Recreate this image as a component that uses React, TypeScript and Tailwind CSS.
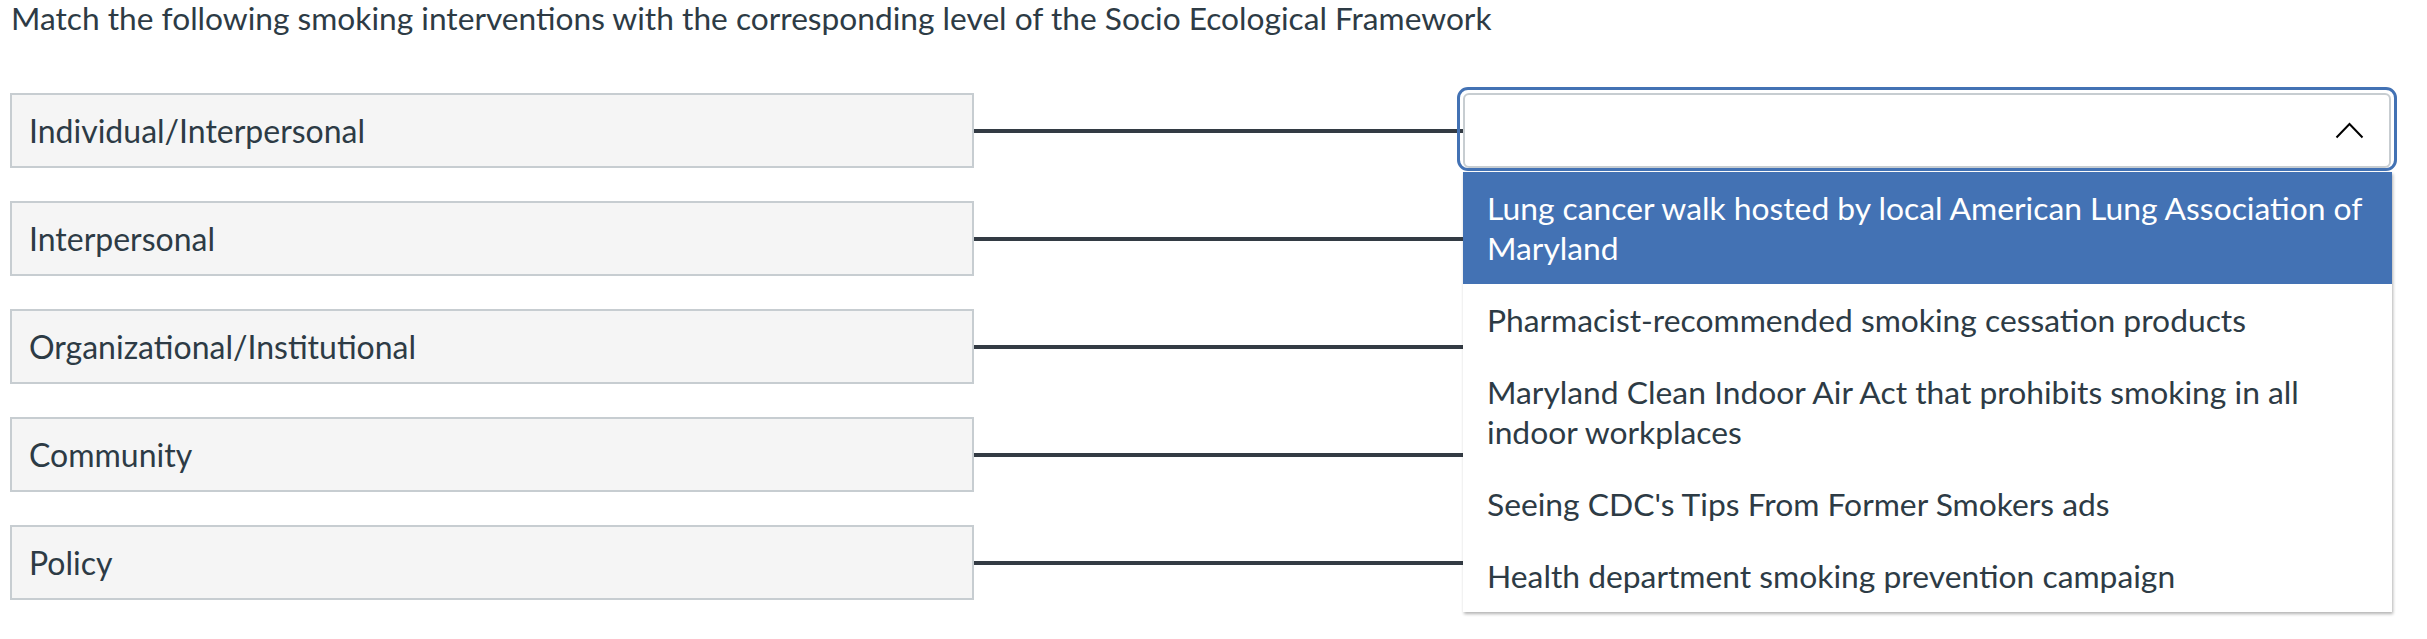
import React from 'react';

const levels = ['Individual/Interpersonal', 'Interpersonal', 'Organizational/Institutional', 'Community', 'Policy'];

const options = [
  'Lung cancer walk hosted by local American Lung Association of Maryland',
  'Pharmacist-recommended smoking cessation products',
  'Maryland Clean Indoor Air Act that prohibits smoking in all indoor workplaces',
  "Seeing CDC's Tips From Former Smokers ads",
  'Health department smoking prevention campaign',
];

const ChevronUp = () => (
  <svg width="29" height="17" viewBox="0 0 29 17" fill="none">
    <path d="M1.5 15.5 L14.5 2 L27.5 15.5" stroke="#000" strokeWidth="2" />
  </svg>
);

const App: React.FC = () => {
  return (
    <div className="w-[2427px] h-[639px] bg-white text-[#2d3b45] font-['Lato',sans-serif] overflow-hidden">
      <p className="pl-[11px] text-[31.7px] leading-[36px]">
        Match the following smoking interventions with the corresponding level of the Socio Ecological Framework
      </p>

      <div className="relative mt-[57px] flex flex-col gap-[33px]">
        {levels.map((label, i) => (
          <div key={label} className="flex items-center h-[75px]">
            <div className="ml-[10px] w-[964px] h-[75px] shrink-0 flex items-center border-2 border-[#c7cdd1] bg-[#f5f5f5] pl-[17px] text-[32px]">
              {label}
            </div>
            <div className="w-[489px] h-[4px] shrink-0 bg-[#333b44]" />
            <div className="relative w-[928px] h-[75px] shrink-0">
              {i === 0 && (
                <span className="absolute -top-[6px] -left-[6px] -right-[6px] -bottom-[3px] rounded-[11px] border-[3px] border-[#4372b4]" />
              )}
              <div className="relative h-full flex items-center justify-end pr-[25px] rounded-[6px] border-2 border-[#c7cdd1] bg-white">
                {i === 0 && <ChevronUp />}
              </div>
            </div>
          </div>
        ))}

        <ul className="absolute left-[1463px] top-[79px] w-[929px] bg-white shadow-[1px_2px_3px_rgba(0,0,0,0.3)] text-[31.8px] leading-[40px]">
          {options.map((opt, i) => (
            <li
              key={opt}
              className={`py-[16px] pl-[24px] pr-[20px] ${i === 0 ? 'bg-[#4372b4] text-white' : ''}`}
            >
              {opt}
            </li>
          ))}
        </ul>
      </div>
    </div>
  );
};

export default App;
